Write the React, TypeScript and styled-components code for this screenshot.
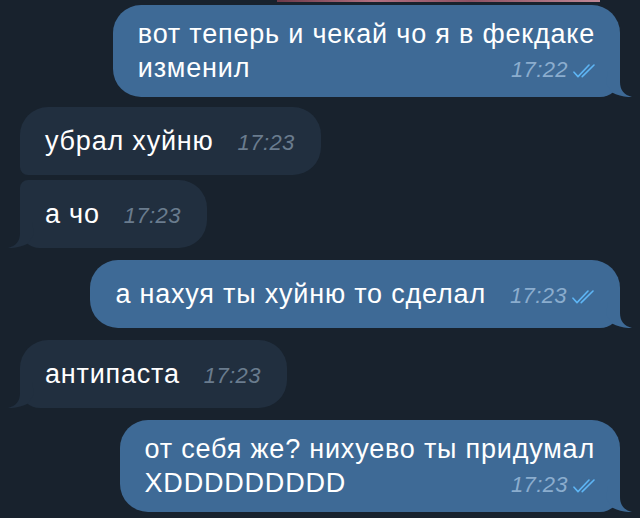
import styled, { createGlobalStyle } from 'styled-components';

const Global = createGlobalStyle`
  html, body {
    margin: 0;
    padding: 0;
    background: #18222d;
  }
`;

const Screen = styled.div`
  width: 640px;
  height: 518px;
  overflow: hidden;
  background: #18222d;
  font-family: 'Liberation Sans', Arial, sans-serif;
  display: flex;
  flex-direction: column;
`;

const PhotoEdge = styled.div`
  align-self: flex-end;
  width: 323px;
  height: 2px;
  margin-right: 40px;
  margin-bottom: 3px;
  background: linear-gradient(90deg, #6d3a49, #b27080 30%, #8e5263 60%, #c08895);
`;

const Row = styled.div<{ $out?: boolean; $gap: number }>`
  display: flex;
  justify-content: ${(p) => (p.$out ? 'flex-end' : 'flex-start')};
  padding: 0 20px;
  margin-top: ${(p) => p.$gap}px;
`;

const Bubble = styled.div<{ $out?: boolean; $radius: string; $multi?: boolean }>`
  position: relative;
  background: ${(p) => (p.$out ? '#3e6a96' : '#212f3f')};
  border-radius: ${(p) => p.$radius};
  padding: ${(p) => (p.$multi ? '12px 25px 12px 25px' : '17px 26px 17px 25px')};
  color: #fff;
  font-size: 27px;
  line-height: 34px;
  letter-spacing: 0.8px;
  white-space: nowrap;
`;

const LastLine = styled.div`
  display: flex;
  align-items: baseline;
  justify-content: space-between;
  gap: 24px;
`;

const Meta = styled.span<{ $out?: boolean }>`
  display: inline-flex;
  align-items: baseline;
  gap: 5px;
  font-size: 22px;
  line-height: 24px;
  letter-spacing: 0.4px;
  font-style: italic;
  color: ${(p) => (p.$out ? '#8badce' : '#6a7c8e')};
  svg {
    align-self: center;
    margin-top: 2px;
  }
`;

const TailSvg = styled.svg<{ $out?: boolean }>`
  position: absolute;
  bottom: 0;
  ${(p) => (p.$out ? 'right: -12px;' : 'left: -12px; transform: scaleX(-1);')}
`;

const Tail = ({ out }: { out?: boolean }) => (
  <TailSvg $out={out} width="32" height="26" viewBox="0 0 32 26">
    <path
      d="M8 0 L20 0 L20 11 C20 19 24 24 32 26 C26 26.4 18 24.8 12 21.5 L6 12 Z"
      fill={out ? '#3e6a96' : '#212f3f'}
    />
  </TailSvg>
);

const Checks = () => (
  <svg width="22" height="14" viewBox="0 0 22 14" fill="none">
    <path
      d="M1 8.2 L5 12.6 L16 1"
      stroke="#5eb5f4"
      strokeWidth="1.6"
      strokeLinecap="round"
      strokeLinejoin="round"
    />
    <path d="M9.2 12.6 L21 1" stroke="#5eb5f4" strokeWidth="1.6" strokeLinecap="round" />
  </svg>
);

type Msg = {
  lines: string[];
  time: string;
  out?: boolean;
  gap: number;
  radius: string;
  tail?: boolean;
};

const messages: Msg[] = [
  {
    lines: ['вот теперь и чекай чо я в фекдаке', 'изменил'],
    time: '17:22',
    out: true,
    gap: 0,
    radius: '28px 28px 20px 28px',
    tail: true,
  },
  { lines: ['убрал хуйню'], time: '17:23', gap: 10, radius: '28px 28px 28px 8px' },
  { lines: ['а чо'], time: '17:23', gap: 5, radius: '8px 28px 28px 20px', tail: true },
  {
    lines: ['а нахуя ты хуйню то сделал'],
    time: '17:23',
    out: true,
    gap: 12,
    radius: '28px 28px 20px 28px',
    tail: true,
  },
  { lines: ['антипаста'], time: '17:23', gap: 12, radius: '28px 28px 28px 20px', tail: true },
  {
    lines: ['от себя же? нихуево ты придумал', 'XDDDDDDDDD'],
    time: '17:23',
    out: true,
    gap: 12,
    radius: '28px 28px 20px 28px',
    tail: true,
  },
];

export default function App() {
  return (
    <>
      <Global />
      <Screen>
        <PhotoEdge />
        {messages.map((m, i) => {
          const last = m.lines[m.lines.length - 1];
          return (
            <Row key={i} $out={m.out} $gap={m.gap}>
              <Bubble $out={m.out} $radius={m.radius} $multi={m.lines.length > 1}>
                {m.lines.slice(0, -1).map((l) => (
                  <div key={l}>{l}</div>
                ))}
                <LastLine>
                  <span>{last}</span>
                  <Meta $out={m.out}>
                    {m.time}
                    {m.out && <Checks />}
                  </Meta>
                </LastLine>
                {m.tail && <Tail out={m.out} />}
              </Bubble>
            </Row>
          );
        })}
      </Screen>
    </>
  );
}
